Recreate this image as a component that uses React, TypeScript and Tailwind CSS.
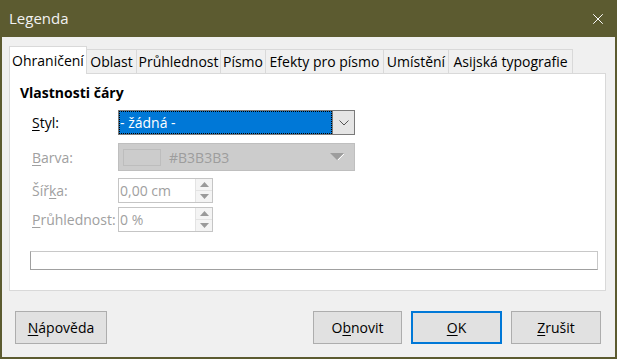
import { X } from "lucide-react";

const font = { fontFamily: '"Open Sans", "Noto Sans", sans-serif' };

const tabs = [
  { label: "Oblast", w: "w-[50px]" },
  { label: "Průhlednost", w: "w-[84px]" },
  { label: "Písmo", w: "w-[45px]" },
  { label: "Efekty pro písmo", w: "w-[118px]" },
  { label: "Umístění", w: "w-[65px]" },
  { label: "Asijská typografie", w: "w-[124px]" },
];

function U({ children }: { children: React.ReactNode }) {
  return <span className="underline underline-offset-2 decoration-1">{children}</span>;
}

function Spin({ value }: { value: string }) {
  return (
    <div className="flex h-[25px] w-[95px] border border-[#c5c5c5] bg-white">
      <div className="flex flex-1 items-center pl-[1px] text-[#a0a0a0]">{value}</div>
      <div className="flex w-[17px] flex-col border-l border-[#e3e3e3]">
        <div className="flex flex-1 items-center justify-center border-b border-[#e3e3e3] bg-[#f4f4f4]">
          <svg width="9" height="5" viewBox="0 0 9 5">
            <path d="M0 5 L4.5 0 L9 5 Z" fill="#9a9a9a" />
          </svg>
        </div>
        <div className="flex flex-1 items-center justify-center bg-[#f4f4f4]">
          <svg width="9" height="5" viewBox="0 0 9 5">
            <path d="M0 0 L4.5 5 L9 0 Z" fill="#9a9a9a" />
          </svg>
        </div>
      </div>
    </div>
  );
}

function Btn({ children, w, primary }: { children: React.ReactNode; w: string; primary?: boolean }) {
  return (
    <button
      className={`flex h-[33px] ${w} items-center justify-center bg-[#e1e1e1] text-black ${
        primary ? "border-2 border-[#0078d7]" : "border border-[#adadad]"
      }`}
    >
      {children}
    </button>
  );
}

export default function App() {
  return (
    <div
      style={font}
      className="flex h-[359px] w-[617px] flex-col border-2 border-t-0 border-[#5c5b30] bg-[#f0f0f0] text-[14px] text-black"
    >
      <div className="flex h-[37px] shrink-0 items-center justify-between bg-[#5c5b30] pl-[7px] pr-[8px] text-[15px] text-[#f2f2f2]">
        <span>Legenda</span>
        <X size={18} strokeWidth={1.3} className="text-white" />
      </div>

      <div className="flex flex-1 flex-col px-[7px]">
        <div className="mt-[9px] flex h-[27px] items-end">
          <div className="relative z-10 -mb-[1px] flex h-[28px] w-[78px] items-center justify-center border border-b-0 border-[#d9d9d9] bg-white">
            Ohraničení
          </div>
          {tabs.map((t) => (
            <div
              key={t.label}
              className={`flex h-[24px] ${t.w} items-center justify-center border border-l-0 border-b-0 border-[#d9d9d9] bg-[#f0f0f0]`}
            >
              {t.label}
            </div>
          ))}
        </div>

        <div className="flex h-[218px] w-[597px] flex-col border border-[#d9d9d9] bg-white px-[10px] pt-[8px]">
          <div className="font-bold">Vlastnosti čáry</div>

          <div className="mt-[7px] grid grid-cols-[86px_237px] items-center pl-[12px]">
            <div>
              <U>S</U>tyl:
            </div>
            <div className="flex h-[25px] border border-[#7a7a7a]">
              <div className="flex flex-1 items-center bg-[#0078d7] pl-[1px] text-white outline-1 outline-dotted outline-offset-[-1px] outline-black">
                - žádná -
              </div>
              <div className="flex w-[22px] items-center justify-center border-l border-[#7a7a7a] bg-[#e5e5e5]">
                <svg width="10" height="6" viewBox="0 0 10 6">
                  <path d="M0.5 0.5 L5 5 L9.5 0.5" fill="none" stroke="#555" strokeWidth="1" />
                </svg>
              </div>
            </div>

            <div className="mt-[8px] text-[#a0a0a0]">
              <U>B</U>arva:
            </div>
            <div className="mt-[8px] flex h-[28px] items-center border border-[#bfbfbf] bg-[#cccccc] pl-[4px] pr-[10px] text-[#9d9d9d]">
              <div className="h-[17px] w-[38px] border border-[#bdbdbd]" />
              <span className="ml-[8px] flex-1">#B3B3B3</span>
              <svg width="14" height="8" viewBox="0 0 14 8">
                <path d="M0 0 L14 0 L7 7 Z" fill="#9d9d9d" />
                <path d="M8 7 L14 1" stroke="#fff" strokeWidth="1" />
              </svg>
            </div>

            <div className="mt-[7px] text-[#a0a0a0]">
              Šíř<U>k</U>a:
            </div>
            <div className="mt-[7px]">
              <Spin value="0,00 cm" />
            </div>

            <div className="mt-[4px] text-[#a0a0a0]">
              <U>P</U>růhlednost:
            </div>
            <div className="mt-[4px]">
              <Spin value="0 %" />
            </div>
          </div>

          <div className="ml-[10px] mt-[19px] h-[19px] w-[568px] border border-[#a0a0a0] border-t-[#c8c8c8] border-r-[#c8c8c8] bg-white" />
        </div>

        <div className="mt-[20px] flex items-center pl-[6px] pr-[7px]">
          <Btn w="w-[92px]">
            <U>N</U>ápověda
          </Btn>
          <div className="ml-auto flex gap-[9px]">
            <Btn w="w-[89px]">
              O<U>b</U>novit
            </Btn>
            <Btn w="w-[91px]" primary>
              <U>O</U>K
            </Btn>
            <Btn w="w-[90px]">
              <U>Z</U>rušit
            </Btn>
          </div>
        </div>
      </div>
    </div>
  );
}
